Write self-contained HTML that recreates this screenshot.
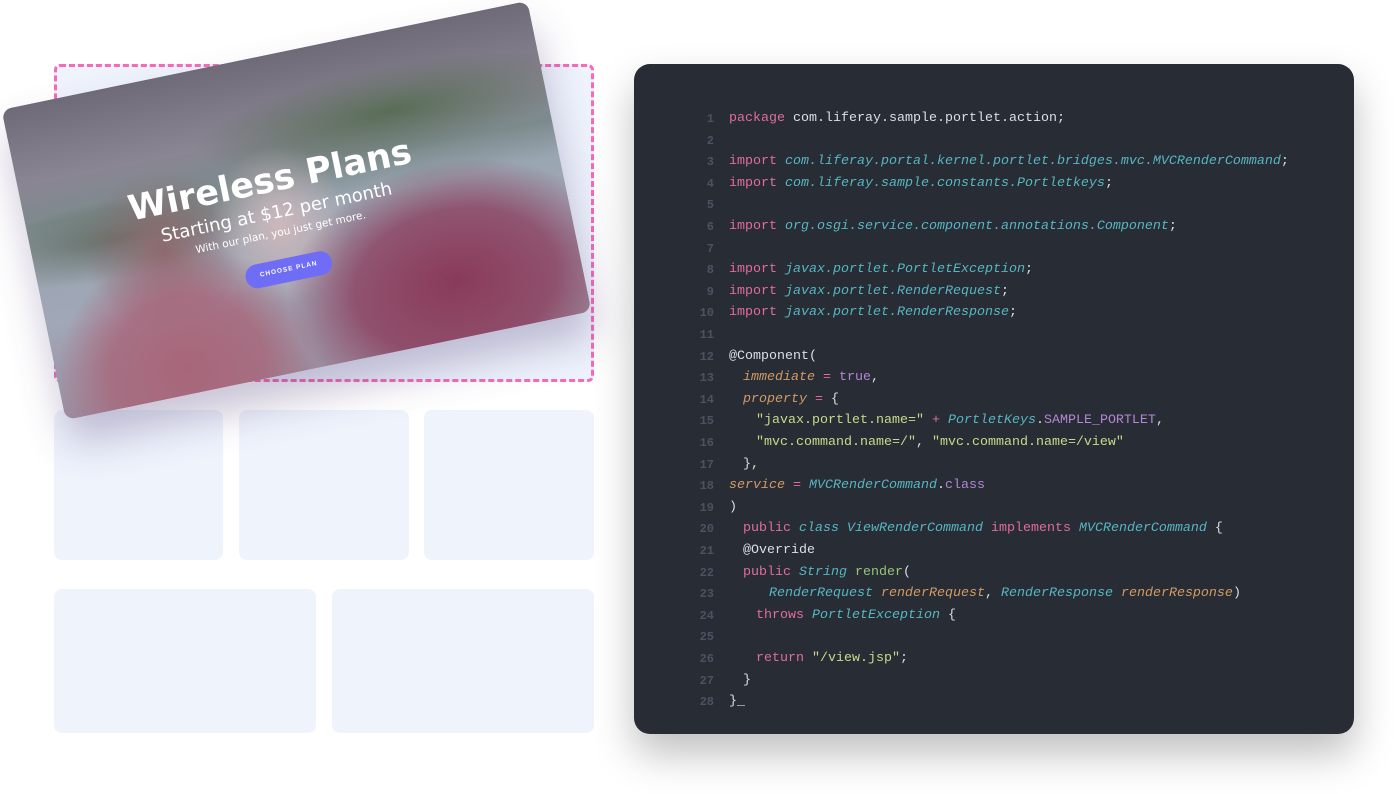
<!DOCTYPE html>
<html><head><meta charset="utf-8"><style>
*{margin:0;padding:0;box-sizing:border-box}
body{width:1394px;height:794px;background:#fff;position:relative;overflow:hidden;font-family:"Liberation Sans",sans-serif}
.box{position:absolute;background:#eef3fc;border-radius:8px}
.dash{position:absolute;left:54px;top:64px;width:540px;height:318px;border:3px dashed #f46cb9;border-radius:6px;background:#eef3fc}
.card{position:absolute;left:28px;top:52px;width:537px;height:317px;transform:rotate(-11.7deg);border-radius:10px;overflow:hidden;box-shadow:0 25px 40px rgba(80,60,120,.3);
background:
radial-gradient(ellipse 130px 120px at 130px 290px,#a8667a 0%,rgba(168,102,122,.8) 60%,rgba(168,102,122,0) 100%),
radial-gradient(ellipse 170px 120px at 410px 260px,#8a3a5a 0%,rgba(138,58,90,.75) 60%,rgba(138,58,90,0) 100%),
radial-gradient(ellipse 70px 80px at 250px 170px,#cdb8bc 0%,rgba(205,184,188,0) 100%),
radial-gradient(ellipse 80px 80px at 130px 170px,#8d6a6e 0%,rgba(141,106,110,0) 100%),
radial-gradient(ellipse 200px 45px at 380px 80px,rgba(80,105,75,.85) 0%,rgba(80,105,75,0) 100%),
radial-gradient(ellipse 160px 40px at 90px 150px,rgba(70,80,60,.6) 0%,rgba(70,80,60,0) 100%),
linear-gradient(180deg,#6f6a78 0%,#8a8694 25%,#7c8a8c 38%,#9aa6b2 50%,#a1a7b7 70%,#9c8c9e 100%)}
.card .t{position:absolute;left:0;width:100%;padding-right:40px;text-align:center;color:#fff;font-family:"DejaVu Sans","Liberation Sans",sans-serif}
.btn{position:absolute;left:205px;top:203px;width:88px;height:24px;border-radius:12px;background:#6f6cf6;color:#fff;font-size:6.5px;font-weight:bold;letter-spacing:1px;text-align:center;line-height:24px}
.code{position:absolute;left:634px;top:64px;width:720px;height:670px;background:#282c34;border-radius:16px;box-shadow:0 20px 40px rgba(0,0,0,.25)}
.ln{position:absolute;left:660px;width:54px;text-align:right;color:#4b5263;font:bold 12px "Liberation Mono",monospace}
.cl{position:absolute;left:729px;white-space:pre;font:13.33px "Liberation Mono",monospace;color:#dcdfe4}
.k{color:#e06c9f}.c{color:#56b6c2;font-style:italic}.o{color:#d19a66;font-style:italic}.p{color:#b586d6}.s{color:#c9d98a}.g{color:#98c379}
</style></head><body>
<div class="dash"></div>
<div class="box" style="left:54px;top:410px;width:169px;height:150px"></div>
<div class="box" style="left:239px;top:410px;width:170px;height:150px"></div>
<div class="box" style="left:424px;top:410px;width:170px;height:150px"></div>
<div class="box" style="left:54px;top:589px;width:262px;height:144px"></div>
<div class="box" style="left:332px;top:589px;width:262px;height:144px"></div>
<div class="card">
<div class="t" style="top:104px;font-size:35px;font-weight:bold">Wireless Plans</div>
<div class="t" style="top:146px;font-size:18px">Starting at $12 per month</div>
<div class="t" style="top:171px;font-size:10.5px">With our plan, you just get more.</div>
<div class="btn">CHOOSE PLAN</div>
</div>
<div class="code"></div>
<div id="c"></div>
<script>
var L=[
[0,'<span class="k">package</span> com.liferay.sample.portlet.action;'],
[0,''],
[0,'<span class="k">import</span> <span class="c">com.liferay.portal.kernel.portlet.bridges.mvc.MVCRenderCommand</span>;'],
[0,'<span class="k">import</span> <span class="c">com.liferay.sample.constants.Portletkeys</span>;'],
[0,''],
[0,'<span class="k">import</span> <span class="c">org.osgi.service.component.annotations.Component</span>;'],
[0,''],
[0,'<span class="k">import</span> <span class="c">javax.portlet.PortletException</span>;'],
[0,'<span class="k">import</span> <span class="c">javax.portlet.RenderRequest</span>;'],
[0,'<span class="k">import</span> <span class="c">javax.portlet.RenderResponse</span>;'],
[0,''],
[0,'@Component('],
[14,'<span class="o">immediate</span> <span class="k">=</span> <span class="p">true</span>,'],
[14,'<span class="o">property</span> <span class="k">=</span> {'],
[27,'<span class="s">"javax.portlet.name="</span> <span class="k">+</span> <span class="c">PortletKeys</span>.<span class="p">SAMPLE_PORTLET</span>,'],
[27,'<span class="s">"mvc.command.name=/"</span>, <span class="s">"mvc.command.name=/view"</span>'],
[14,'},'],
[0,'<span class="o">service</span> <span class="k">=</span> <span class="c">MVCRenderCommand</span>.<span class="p">class</span>'],
[0,')'],
[14,'<span class="k">public</span> <span class="c">class ViewRenderCommand</span> <span class="k">implements</span> <span class="c">MVCRenderCommand</span> {'],
[14,'@Override'],
[14,'<span class="k">public</span> <span class="c">String</span> <span class="g">render</span>('],
[40,'<span class="c">RenderRequest</span> <span class="o">renderRequest</span>, <span class="c">RenderResponse</span> <span class="o">renderResponse</span>)'],
[27,'<span class="k">throws</span> <span class="c">PortletException</span> {'],
[0,''],
[27,'<span class="k">return</span> <span class="s">"/view.jsp"</span>;'],
[14,'}'],
[0,'}_']];
var h='';L.forEach(function(l,i){var y=111+i*21.6;h+='<div class="ln" style="top:'+(y+1)+'px">'+(i+1)+'</div><div class="cl" style="top:'+y+'px;margin-left:'+l[0]+'px">'+l[1]+'</div>';});
document.getElementById('c').innerHTML=h;
</script>
</body></html>
